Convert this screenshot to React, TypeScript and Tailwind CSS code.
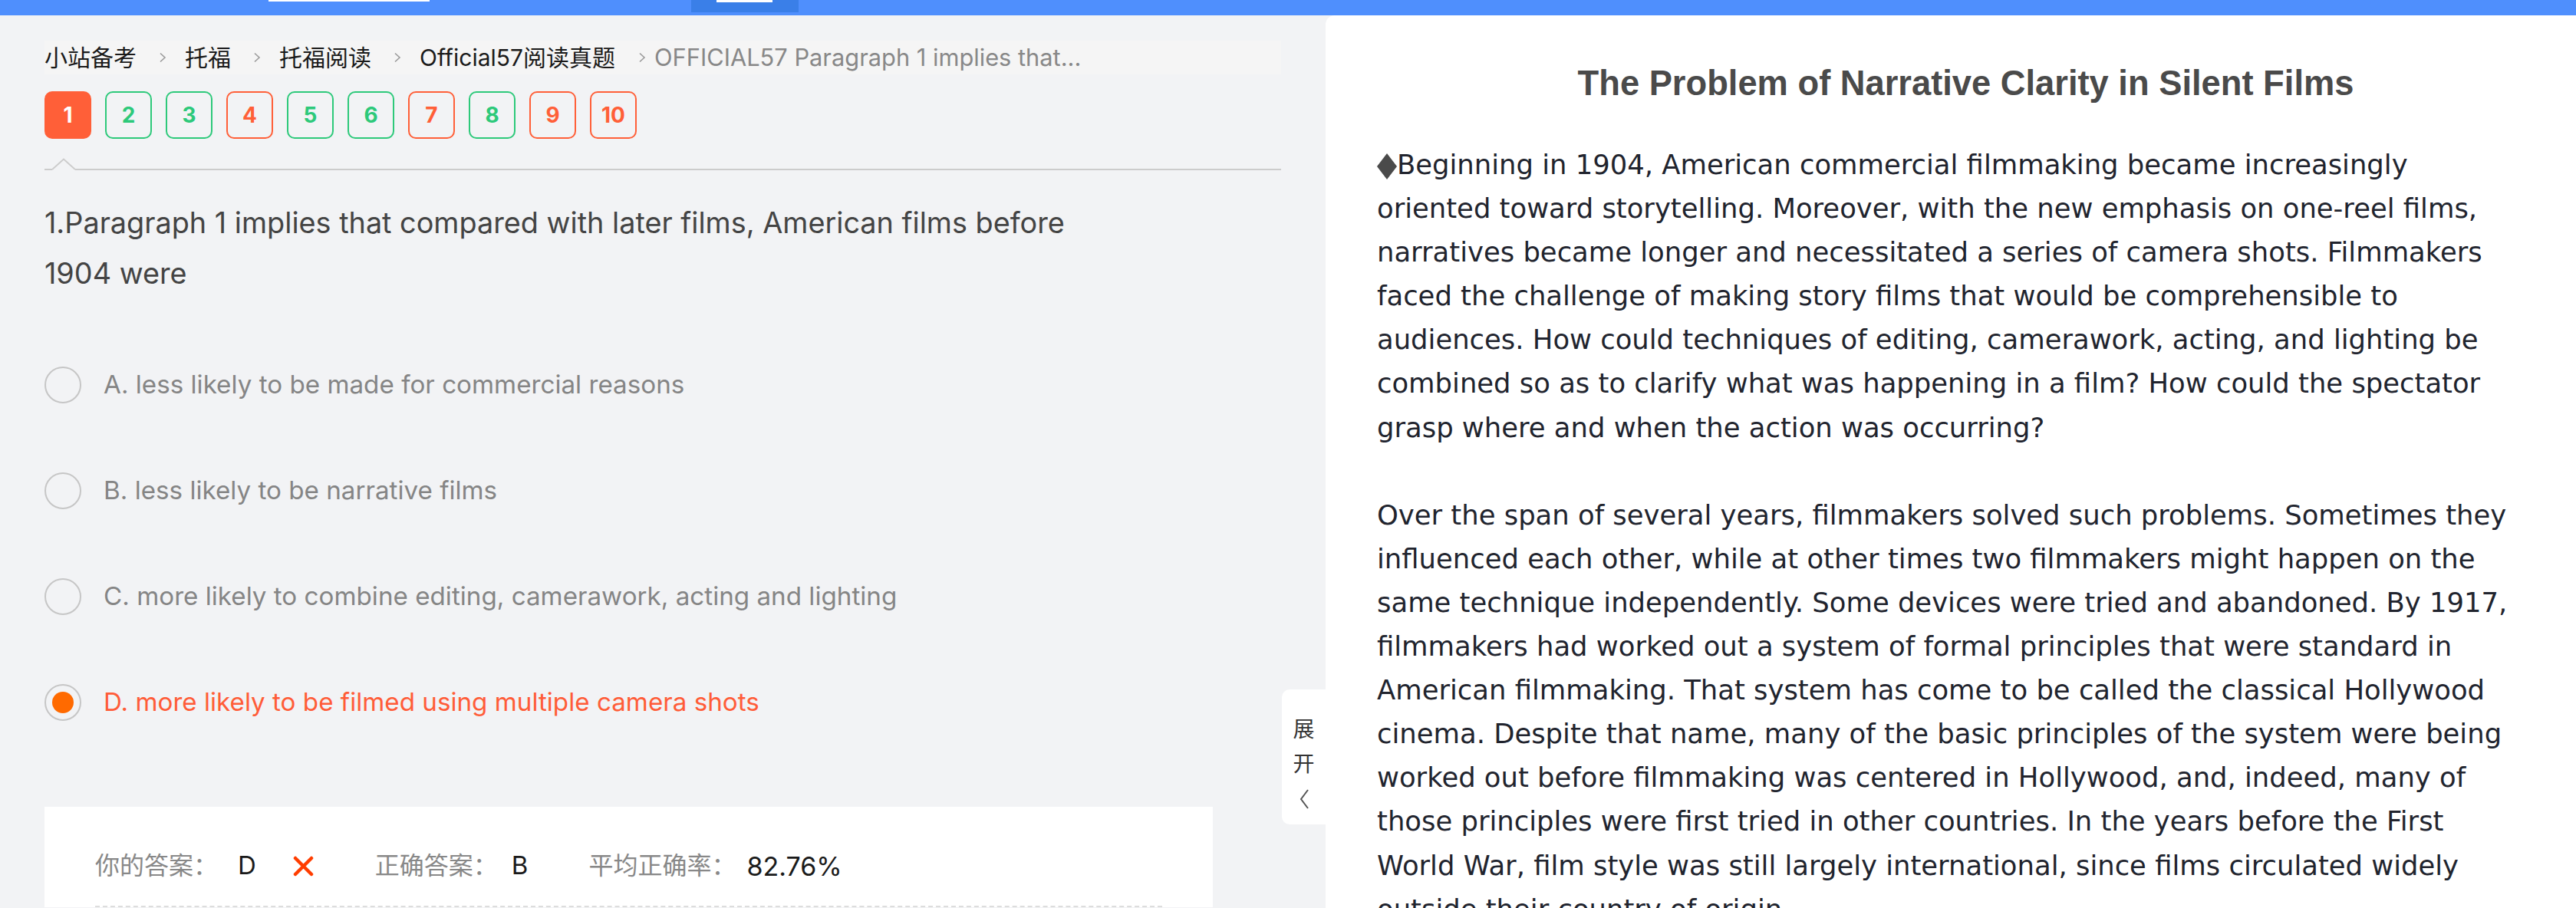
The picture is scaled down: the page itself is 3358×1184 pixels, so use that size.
import { Fragment } from 'react';

type QState = 'current' | 'right' | 'wrong';

const questions: { n: number; state: QState }[] = [
  { n: 1, state: 'current' },
  { n: 2, state: 'right' },
  { n: 3, state: 'right' },
  { n: 4, state: 'wrong' },
  { n: 5, state: 'right' },
  { n: 6, state: 'right' },
  { n: 7, state: 'wrong' },
  { n: 8, state: 'right' },
  { n: 9, state: 'wrong' },
  { n: 10, state: 'wrong' },
];

const qClass: Record<QState, string> = {
  current: 'bg-[#ff5f38] border-[#ff5f38] text-white',
  right: 'border-[#2dc97a] text-[#2dc97a]',
  wrong: 'border-[#ff5f38] text-[#ff5f38]',
};

const crumbs = ['小站备考', '托福', '托福阅读', 'Official57阅读真题'];

const options = [
  { key: 'A', text: 'less likely to be made for commercial reasons' },
  { key: 'B', text: 'less likely to be narrative films' },
  { key: 'C', text: 'more likely to combine editing, camerawork, acting and lighting' },
  { key: 'D', text: 'more likely to be filmed using multiple camera shots' },
];

const chosen = 'D';

const passage = [
  [
    'Beginning in 1904, American commercial filmmaking became increasingly',
    'oriented toward storytelling. Moreover, with the new emphasis on one-reel films,',
    'narratives became longer and necessitated a series of camera shots. Filmmakers',
    'faced the challenge of making story films that would be comprehensible to',
    'audiences. How could techniques of editing, camerawork, acting, and lighting be',
    'combined so as to clarify what was happening in a film? How could the spectator',
    'grasp where and when the action was occurring?',
  ],
  [
    'Over the span of several years, filmmakers solved such problems. Sometimes they',
    'influenced each other, while at other times two filmmakers might happen on the',
    'same technique independently. Some devices were tried and abandoned. By 1917,',
    'filmmakers had worked out a system of formal principles that were standard in',
    'American filmmaking. That system has come to be called the classical Hollywood',
    'cinema. Despite that name, many of the basic principles of the system were being',
    'worked out before filmmaking was centered in Hollywood, and, indeed, many of',
    'those principles were first tried in other countries. In the years before the First',
    'World War, film style was still largely international, since films circulated widely',
    'outside their country of origin.',
  ],
];

const Chevron = ({ last }: { last?: boolean }) => (
  <svg
    width="10"
    height="14"
    viewBox="0 0 10 14"
    className={last ? 'ml-[30px] mr-[11px] shrink-0' : 'ml-[29px] mr-[24px] shrink-0'}
  >
    <path d="M2 1.5 L8 7 L2 12.5" fill="none" stroke="#9a9a9a" strokeWidth="1.6" />
  </svg>
);

const App = () => {
  return (
    <div className="w-[3358px] h-[1184px] overflow-hidden flex flex-col bg-[#f2f3f5] font-['Inter','Noto_Sans_CJK_SC',sans-serif]">
      {/* top bar (cut off) */}
      <div className="h-[20px] shrink-0 bg-[#4f8ffd] flex items-start">
        <div className="ml-[350px] w-[210px] h-[2px] bg-white" />
        <div className="ml-[341px] w-[140px] h-[16px] bg-[#3a7fe8] flex items-start">
          <div className="ml-[33px] w-[73px] h-[3px] bg-white" />
        </div>
      </div>

      <div className="flex flex-1 min-h-0">
        {/* left: question */}
        <div className="relative w-[1728px] shrink-0 px-[58px] pt-[33px]">
          <div className="h-[44px] bg-[#f5f5f5] flex items-center text-[30px] whitespace-nowrap">
            {crumbs.map((c, i) => (
              <Fragment key={c}>
                <span className="text-[#1a1a1a]">{c}</span>
                <Chevron last={i === crumbs.length - 1} />
              </Fragment>
            ))}
            <span className="text-[#888888] text-[30.8px]">OFFICIAL57 Paragraph 1 implies that...</span>
          </div>

          <div className="mt-[22px] flex gap-[18px]">
            {questions.map((q) => (
              <div
                key={q.n}
                className={`w-[61px] h-[62px] rounded-[10px] border-2 flex items-center justify-center text-[28px] font-bold ${qClass[q.state]}`}
              >
                {q.n}
              </div>
            ))}
          </div>

          {/* divider with caret */}
          <div className="mt-[25px] flex items-end h-[16px]">
            <div className="w-[10px] h-[2px] bg-[#cccccc]" />
            <svg width="30" height="16" viewBox="0 0 30 16" className="shrink-0">
              <path d="M0 15 L15 1.5 L30 15" fill="none" stroke="#cccccc" strokeWidth="2" />
            </svg>
            <div className="flex-1 h-[2px] bg-[#cccccc]" />
          </div>

          <div className="mt-[35px] w-[1500px] text-[37.8px] leading-[66px] text-[#444444]">
            1.Paragraph 1 implies that compared with later films, American films before
            <br />
            1904 were
          </div>

          <div className="mt-[89px] flex flex-col gap-[90px]">
            {options.map((o) => {
              const on = o.key === chosen;
              return (
                <div key={o.key} className="flex items-center h-[48px]">
                  <div className="w-[48px] h-[48px] rounded-full border-2 border-[#c6c6c6] flex items-center justify-center shrink-0">
                    {on && <div className="w-[28px] h-[28px] rounded-full bg-[#ff6a00]" />}
                  </div>
                  <span className={`ml-[29px] text-[33.2px] ${on ? 'text-[#ff5c38]' : 'text-[#858585]'}`}>
                    {o.key}. {o.text}
                  </span>
                </div>
              );
            })}
          </div>

          {/* answer card */}
          <div className="mt-[112px] w-[1523px] bg-white px-[66px] pt-[53px]">
            <div className="flex items-center h-[48px] text-[32px] whitespace-nowrap">
              <span className="text-[#888888]">你的答案：</span>
              <span className="ml-[26px] text-[#1a1a1a] text-[33px]">D</span>
              <svg width="27" height="27" viewBox="0 0 27 27" className="ml-[48px]">
                <path d="M3 3 L24 24 M24 3 L3 24" stroke="#ff3d00" strokeWidth="4.5" strokeLinecap="round" />
              </svg>
              <span className="ml-[80px] text-[#888888]">正确答案：</span>
              <span className="ml-[18px] text-[#1a1a1a] text-[33px]">B</span>
              <span className="ml-[79px] text-[#888888]">平均正确率：</span>
              <span className="ml-[14px] text-[#1a1a1a] text-[34px]">82.76%</span>
            </div>
            <div className="mt-[28px] border-t-2 border-dashed border-[#dddddd]" />
          </div>

          {/* expand tab */}
          <div className="absolute right-0 top-[879px] w-[57px] h-[176px] bg-white rounded-l-[10px] flex flex-col items-center pt-[30px] text-[28px] leading-[45px] text-[#333333]">
            <span>展</span>
            <span>开</span>
            <div className="h-[45px] flex items-center">
              <svg width="14" height="28" viewBox="0 0 14 28">
                <path d="M12 2 L3 14 L12 26" fill="none" stroke="#555555" strokeWidth="2" />
              </svg>
            </div>
          </div>
        </div>

        {/* right: passage */}
        <div className="flex-1 min-w-0 bg-white rounded-tl-[12px] pl-[67px] pr-[28px] pt-[59px]">
          <h1 className="text-center text-[45.3px] leading-[60px] font-bold text-[#4a4a4a] font-['Liberation_Sans',Arial,sans-serif]">
            The Problem of Narrative Clarity in Silent Films
          </h1>
          <div className="mt-[47px] text-[35.4px] leading-[57.1px] text-[#21242e] font-['DejaVu_Sans',sans-serif] whitespace-nowrap">
            {passage.map((para, pi) => (
              <div key={pi} className={pi > 0 ? 'mt-[57.1px]' : ''}>
                {para.map((line, li) => (
                  <div key={li}>
                    {pi === 0 && li === 0 && (
                      <svg width="26" height="34" viewBox="0 0 26 34" className="inline-block align-[-7px]">
                        <path d="M13 0 L26 17 L13 34 L0 17 Z" fill="#4a4a4a" />
                      </svg>
                    )}
                    {line}
                  </div>
                ))}
              </div>
            ))}
          </div>
        </div>
      </div>
    </div>
  );
};

export default App;
